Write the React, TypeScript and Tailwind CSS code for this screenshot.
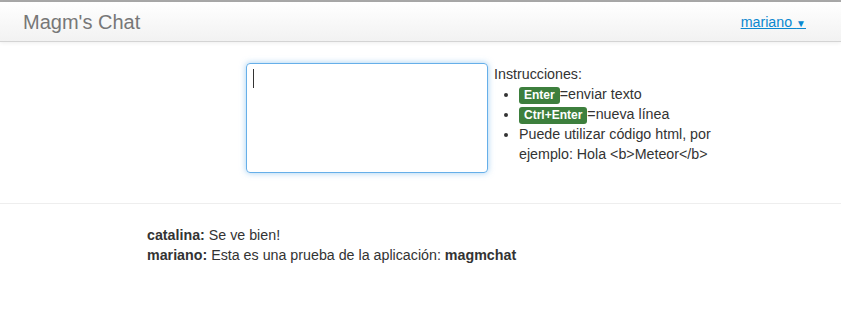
import React from "react";

export default function App() {
  return (
    <div className="w-[841px] h-[322px] bg-white text-[#333] text-[14.25px] leading-[20px]" style={{ fontFamily: '"Liberation Sans", Arial, sans-serif' }}>
      <div className="border-t-2 border-[#a9a9a9]">
        <div className="h-[40px] flex items-center justify-between bg-gradient-to-b from-white to-[#f2f2f2] border-b border-[#d4d4d4] shadow-[0_1px_4px_rgba(0,0,0,0.07)]">
          <span className="ml-[23px] text-[20px] text-[#777] leading-[20px] mt-[1px]">Magm's Chat</span>
          <a className="mr-[35px] text-[14.25px] text-[#0a88d0] underline mt-[2px]">mariano <span className="text-[10px]">▼</span></a>
        </div>
      </div>
      <div className="flex mt-[21px] ml-[246px]">
        <div className="w-[242px] h-[110px] rounded-[4px] border border-[#66afe9] shadow-[0_0_6px_rgba(102,175,233,0.6)] relative">
          <div className="absolute left-[6px] top-[5px] w-[1px] h-[19px] bg-[#333]" />
        </div>
        <div className="ml-[6px] mt-[1px]">
          <div>Instrucciones:</div>
          <ul className="list-disc pl-[25px]">
            <li>
              <span className="inline-block bg-[#3d7f3d] text-white font-bold text-[12px] leading-[15px] px-[5px] rounded-[3px] align-[0px] pt-[1px] pb-[1px]">Enter</span>=enviar texto
            </li>
            <li>
              <span className="inline-block bg-[#3d7f3d] text-white font-bold text-[12px] leading-[15px] px-[5px] rounded-[3px] align-[0px] pt-[1px] pb-[1px]">Ctrl+Enter</span>=nueva línea
            </li>
            <li className="w-[205px]">Puede utilizar código html, por ejemplo: Hola &lt;b&gt;Meteor&lt;/b&gt;</li>
          </ul>
        </div>
      </div>
      <div className="mt-[30px] border-t border-[#eee]" />
      <div className="ml-[147px] mt-[21px]">
        <div><b>catalina:</b> Se ve bien!</div>
        <div><b>mariano:</b> Esta es una prueba de la aplicación: <b>magmchat</b></div>
      </div>
    </div>
  );
}
